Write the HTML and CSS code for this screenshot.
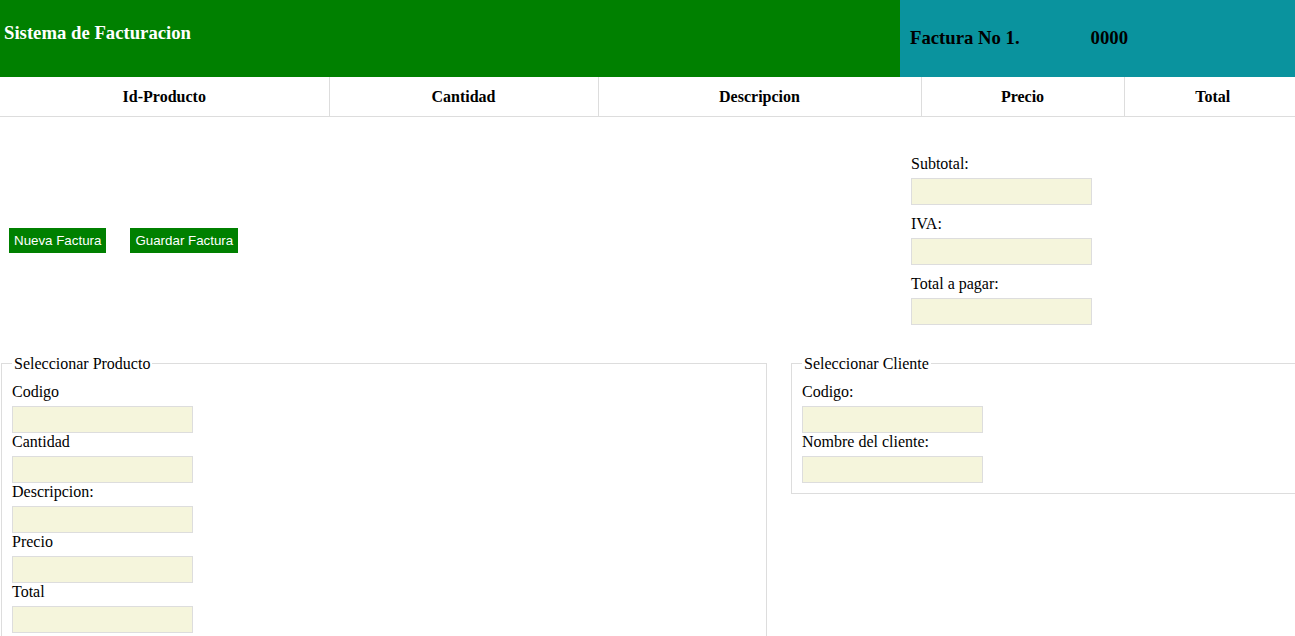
FILE: index.html
```html
<!DOCTYPE html>
<html lang="es">
<head>
<meta charset="utf-8">
<title>Sistema de Facturacion</title>
<link rel="stylesheet" href="styles.css">
</head>
<body>
<header class="topbar">
  <div class="brand"><h1 class="brand-title">Sistema de Facturacion</h1></div>
  <div class="invoice-no">
    <span class="invoice-label">Factura No 1.</span>
    <span class="invoice-num">0000</span>
  </div>
</header>
<table class="items">
  <thead>
    <tr>
      <th class="c-id">Id-Producto</th>
      <th class="c-qty">Cantidad</th>
      <th class="c-desc">Descripcion</th>
      <th class="c-price">Precio</th>
      <th class="c-total">Total</th>
    </tr>
  </thead>
</table>
<section class="summary">
  <div class="actions">
    <button class="btn">Nueva Factura</button>
    <button class="btn">Guardar Factura</button>
  </div>
  <div class="totals">
    <label class="lbl">Subtotal:</label>
    <input class="field" type="text">
    <label class="lbl">IVA:</label>
    <input class="field" type="text">
    <label class="lbl">Total a pagar:</label>
    <input class="field" type="text">
  </div>
</section>
<section class="selectors">
  <fieldset class="box box-product">
    <legend class="box-legend">Seleccionar Producto</legend>
    <label class="lbl">Codigo</label>
    <input class="field" type="text">
    <label class="lbl">Cantidad</label>
    <input class="field" type="text">
    <label class="lbl">Descripcion:</label>
    <input class="field" type="text">
    <label class="lbl">Precio</label>
    <input class="field" type="text">
    <label class="lbl">Total</label>
    <input class="field" type="text">
  </fieldset>
  <fieldset class="box box-client">
    <legend class="box-legend">Seleccionar Cliente</legend>
    <label class="lbl">Codigo:</label>
    <input class="field" type="text">
    <label class="lbl">Nombre del cliente:</label>
    <input class="field" type="text">
  </fieldset>
</section>
</body>
</html>
```
FILE: styles.css
```css
html, body {
  margin: 0;
  padding: 0;
  overflow: hidden;
}
body {
  font-family: "Liberation Serif", "Times New Roman", serif;
  font-size: 16px;
  line-height: 18px;
  color: #000;
  background: #fff;
  width: 1301px;
}
.topbar {
  display: flex;
  height: 77px;
}
.brand {
  flex: 0 0 900px;
  background: #008000;
  color: #fff;
  padding: 24px 0 0 4px;
  box-sizing: border-box;
}
.brand-title {
  margin: 0;
  font-size: 18.72px;
  line-height: 18px;
  font-weight: bold;
}
.invoice-no {
  flex: 1;
  background: #0a939e;
  display: flex;
  align-items: flex-start;
  padding: 29px 0 0 10px;
  font-size: 18.72px;
  font-weight: bold;
}
.invoice-num {
  margin-left: 71px;
}
.items {
  width: 1301px;
  border-collapse: collapse;
  table-layout: fixed;
}
.items th {
  height: 39px;
  padding: 2px 0 0;
  font-size: 16px;
  font-weight: bold;
  text-align: center;
  border-bottom: 1px solid #ddd;
  border-right: 1px solid #ddd;
  box-sizing: border-box;
}
.items th.c-total { border-right: none; }
.c-id { width: 329px; }
.c-qty { width: 269px; }
.c-desc { width: 323px; }
.c-price { width: 203px; }
.summary {
  display: flex;
  align-items: center;
  padding: 38px 0 30px;
}
.actions {
  flex: 0 0 911px;
  display: flex;
  align-items: center;
  gap: 24px;
  padding: 2px 0 0 9px;
  box-sizing: border-box;
}
.btn {
  background: #008000;
  color: #fff;
  border: none;
  font-family: "Liberation Sans", Arial, sans-serif;
  font-size: 13.333px;
  line-height: 15px;
  padding: 5px 5px;
  margin: 0;
  border-radius: 0;
}
.totals {
  display: flex;
  flex-direction: column;
  align-items: flex-start;
}
.lbl {
  display: block;
  height: 18px;
  line-height: 18px;
  margin-bottom: 5px;
}
.field {
  display: block;
  width: 181px;
  height: 27px;
  box-sizing: border-box;
  border: 1px solid #ddd;
  background: #f5f5dc;
  margin: 0;
  padding: 0;
}
.totals .field {
  margin-bottom: 10px;
}
.totals .field:last-child {
  margin-bottom: 0;
}
.selectors {
  display: flex;
  align-items: flex-start;
  gap: 24px;
  padding-left: 1px;
}
.box {
  margin: 0;
  border: 1px solid #ddd;
  padding: 10px 10px 10px 10px;
  flex-shrink: 0;
  box-sizing: border-box;
}
.box-product {
  width: 766px;
}
.box-client {
  width: 560px;
}
.box-legend {
  padding: 0 2px;
  font-size: 16px;
  line-height: 18px;
}
```
